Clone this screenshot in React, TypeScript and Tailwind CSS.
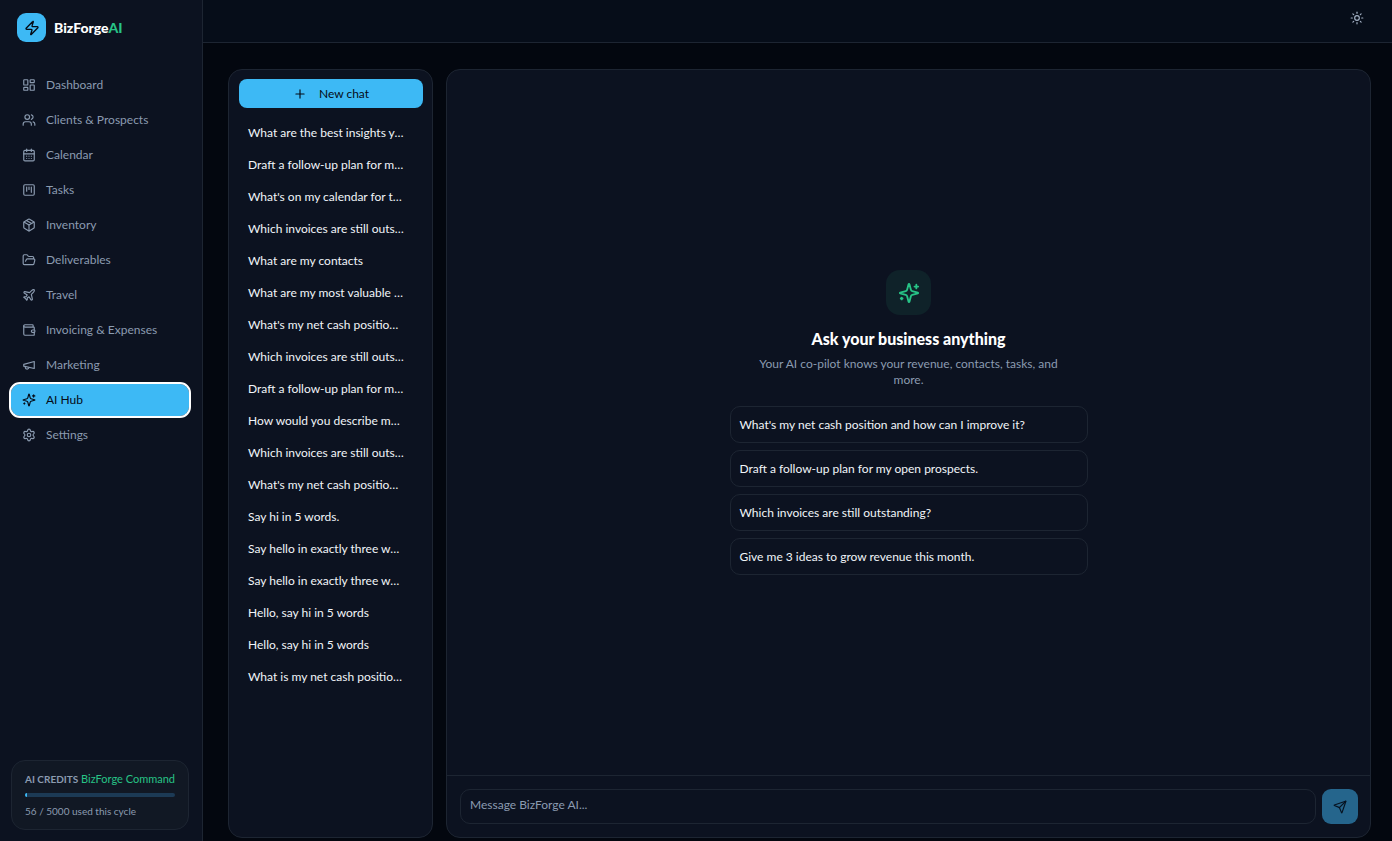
import React from 'react';
import {
  CalendarDays,
  FolderOpen,
  LayoutDashboard,
  Package,
  Plane,
  Plus,
  Send,
  Settings,
  SquareKanban,
  Sun,
  Users,
  Wallet,
  Zap,
} from 'lucide-react';

type IconProps = { className?: string };

const SparkleIcon: React.FC<IconProps> = ({ className }) => (
  <svg
    viewBox="0 0 24 24"
    fill="none"
    stroke="currentColor"
    strokeWidth={2}
    strokeLinecap="round"
    strokeLinejoin="round"
    className={className}
    aria-hidden="true"
  >
    <path d="M9.937 15.5A2 2 0 0 0 8.5 14.063l-6.135-1.582a.5.5 0 0 1 0-.962L8.5 9.936A2 2 0 0 0 9.937 8.5l1.582-6.135a.5.5 0 0 1 .963 0L14.063 8.5A2 2 0 0 0 15.5 9.937l6.135 1.581a.5.5 0 0 1 0 .964L15.5 14.063a2 2 0 0 0-1.437 1.437l-1.582 6.135a.5.5 0 0 1-.963 0z" />
    <path d="M20 3v4M22 5h-4M4 17v2M5 18H3" />
  </svg>
);

const MegaphoneIcon: React.FC<IconProps> = ({ className }) => (
  <svg
    viewBox="0 0 24 24"
    fill="none"
    stroke="currentColor"
    strokeWidth={2}
    strokeLinecap="round"
    strokeLinejoin="round"
    className={className}
    aria-hidden="true"
  >
    <path d="m3 11 18-5v12L3 14v-3z" />
    <path d="M11.6 16.8a3 3 0 1 1-5.8-1.6" />
  </svg>
);

const navItems = [
  { label: 'Dashboard', icon: LayoutDashboard },
  { label: 'Clients & Prospects', icon: Users },
  { label: 'Calendar', icon: CalendarDays },
  { label: 'Tasks', icon: SquareKanban },
  { label: 'Inventory', icon: Package },
  { label: 'Deliverables', icon: FolderOpen },
  { label: 'Travel', icon: Plane },
  { label: 'Invoicing & Expenses', icon: Wallet },
  { label: 'Marketing', icon: MegaphoneIcon },
  { label: 'AI Hub', icon: SparkleIcon, active: true },
  { label: 'Settings', icon: Settings },
];

const chats = [
  'What are the best insights y…',
  'Draft a follow-up plan for m…',
  "What's on my calendar for t…",
  'Which invoices are still outs…',
  'What are my contacts',
  'What are my most valuable …',
  "What's my net cash positio…",
  'Which invoices are still outs…',
  'Draft a follow-up plan for m…',
  'How would you describe m…',
  'Which invoices are still outs…',
  "What's my net cash positio…",
  'Say hi in 5 words.',
  'Say hello in exactly three w…',
  'Say hello in exactly three w…',
  'Hello, say hi in 5 words',
  'Hello, say hi in 5 words',
  'What is my net cash positio…',
];

const suggestions = [
  "What's my net cash position and how can I improve it?",
  'Draft a follow-up plan for my open prospects.',
  'Which invoices are still outstanding?',
  'Give me 3 ideas to grow revenue this month.',
];

const credits = { used: 56, total: 5000 };

const Sidebar: React.FC = () => (
  <aside className="flex w-[203px] shrink-0 flex-col border-r border-[#1d2532] bg-[#0c1220] pr-[13px] pb-[11px] pl-[11px]">
    <a href="#" className="flex items-center gap-2 px-1.5 pt-[13px]">
      <span className="flex size-[29px] items-center justify-center rounded-[9px] bg-[#3db9f5] text-[#050b16]">
        <Zap className="size-4" />
      </span>
      <span className="text-sm font-black text-white">
        BizForge<span className="text-[#27c386]">AI</span>
      </span>
    </a>

    <nav className="mt-[27px] flex flex-col gap-[3px]">
      {navItems.map(({ label, icon: Icon, active }) => (
        <a
          key={label}
          href="#"
          aria-current={active ? 'page' : undefined}
          className={
            active
              ? 'flex h-8 items-center gap-2.5 rounded-[9px] bg-[#3db9f5] px-[11px] text-xs text-[#050b16] outline-2 outline-white'
              : 'flex h-8 items-center gap-2.5 rounded-[9px] px-[11px] text-xs text-[#8b9bb0]'
          }
        >
          <Icon className="size-3.5 shrink-0" />
          {label}
        </a>
      ))}
    </nav>

    <div className="mt-auto rounded-[14px] border border-[#1d2532] bg-[#111824] px-[13px] py-3 text-[10px] leading-3 text-[#8b9bb0]">
      <div className="flex justify-between whitespace-nowrap">
        <span className="font-bold">AI CREDITS</span>
        <span className="text-[11px] text-[#27c386]">BizForge Command</span>
      </div>
      <div className="my-2 h-1 overflow-hidden rounded-full bg-[#1c3a55]">
        <div className="h-full bg-[#3db9f5]" style={{ width: `${(credits.used / credits.total) * 100}%` }} />
      </div>
      <p>
        {credits.used} / {credits.total} used this cycle
      </p>
    </div>
  </aside>
);

const ChatHistory: React.FC = () => (
  <section className="flex w-[205px] shrink-0 flex-col rounded-[14px] border border-[#1d2532] bg-[#0c1220] pt-[9px] pr-[9px] pl-2.5">
    <button className="flex h-[29px] items-center justify-center gap-3 rounded-lg bg-[#3db9f5] text-xs text-[#050b16]">
      <Plus className="size-3.5" />
      New chat
    </button>
    <ul className="mt-[9px] text-xs text-[#f1f5f9]">
      {chats.map((chat, idx) => (
        <li key={idx}>
          <button className="h-8 w-full truncate px-[9px] text-left">{chat}</button>
        </li>
      ))}
    </ul>
  </section>
);

const ChatPanel: React.FC = () => (
  <section className="flex min-w-0 flex-1 flex-col rounded-[14px] border border-[#1d2532] bg-[#0c1220]">
    <div className="flex flex-1 flex-col items-center justify-center">
      <div className="flex size-[45px] items-center justify-center rounded-[14px] bg-[#0f2229] text-[#27c386]">
        <SparkleIcon className="size-[22px]" />
      </div>
      <h1 className="mt-3.5 text-base leading-5 font-black text-white">Ask your business anything</h1>
      <p className="mt-[7px] w-[320px] text-center text-xs leading-4 text-[#8b9bb0]">
        Your AI co-pilot knows your revenue, contacts, tasks, and more.
      </p>
      <div className="mt-[18px] flex w-[358px] flex-col gap-[7px]">
        {suggestions.map((text) => (
          <button
            key={text}
            className="h-[37px] rounded-[10px] border border-[#1d2532] px-[9px] text-left text-xs text-[#f1f5f9]"
          >
            {text}
          </button>
        ))}
      </div>
    </div>

    <form className="flex gap-1.5 border-t border-[#1d2532] p-[13px] pr-3">
      <input
        type="text"
        aria-label="Message"
        placeholder="Message BizForge AI..."
        className="h-[35px] min-w-0 flex-1 rounded-[10px] border border-[#1d2532] bg-transparent px-[9px] pb-1 text-xs text-white placeholder:text-[#8b9bb0]"
      />
      <button
        type="button"
        aria-label="Send"
        className="flex h-[35px] w-9 items-center justify-center rounded-[9px] bg-[#25658c] text-[#071321]"
      >
        <Send className="size-3.5" />
      </button>
    </form>
  </section>
);

const App: React.FC = () => {
  return (
    <div className="flex h-screen bg-[#03070f] font-['Lato',sans-serif]">
      <Sidebar />
      <div className="flex min-w-0 flex-1 flex-col">
        <header className="flex h-[43px] shrink-0 items-start justify-end border-b border-[#1d2532] bg-[#060d19] px-7 pt-[11px]">
          <button aria-label="Toggle theme" className="text-[#a3b1c4]">
            <Sun className="size-3.5" />
          </button>
        </header>
        <main className="flex min-h-0 flex-1 gap-[13px] pt-[26px] pr-[21px] pb-[3px] pl-[25px]">
          <ChatHistory />
          <ChatPanel />
        </main>
      </div>
    </div>
  );
};

export default App;
